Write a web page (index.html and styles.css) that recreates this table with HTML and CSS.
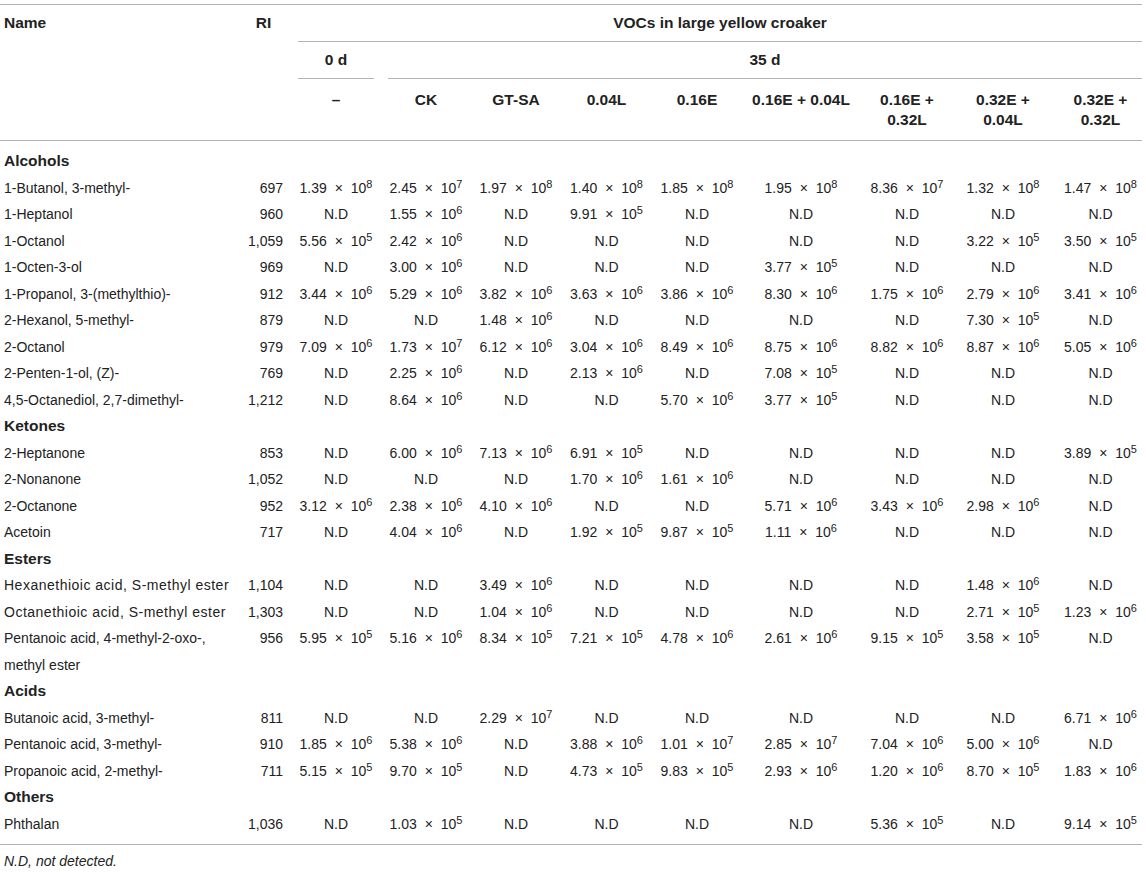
FILE: index.html
```html
<!DOCTYPE html>
<html lang="en">
<head>
<meta charset="utf-8">
<title>VOCs in large yellow croaker</title>
<link rel="stylesheet" href="styles.css">
</head>
<body>
<div class="page">
<table class="tbl">
  <colgroup>
    <col class="w-name"><col class="w-ri"><col class="w-90"><col class="w-90"><col class="w-90"><col class="w-91"><col class="w-90"><col class="w-118"><col class="w-94"><col class="w-98"><col class="w-90">
  </colgroup>
  <thead>
    <tr>
      <th class="h-name" rowspan="3">Name</th>
      <th class="h-ri" rowspan="3">RI</th>
      <th class="h-span" colspan="9"><div class="rule-r">VOCs in large yellow croaker</div></th>
    </tr>
    <tr>
      <th class="h-span"><div class="rule">0 d</div></th>
      <th class="h-span" colspan="8"><div class="rule-r">35 d</div></th>
    </tr>
    <tr class="h-trt">
      <th>–</th><th>CK</th><th>GT-SA</th><th>0.04L</th><th>0.16E</th><th>0.16E + 0.04L</th><th>0.16E + 0.32L</th><th>0.32E + 0.04L</th><th>0.32E + 0.32L</th>
    </tr>
  </thead>
  <tbody>
    <tr class="first"><td class="grp" colspan="11">Alcohols</td></tr>
    <tr><td>1-Butanol, 3-methyl-</td><td>697</td><td>1.39 × 10<sup>8</sup></td><td>2.45 × 10<sup>7</sup></td><td>1.97 × 10<sup>8</sup></td><td>1.40 × 10<sup>8</sup></td><td>1.85 × 10<sup>8</sup></td><td>1.95 × 10<sup>8</sup></td><td>8.36 × 10<sup>7</sup></td><td>1.32 × 10<sup>8</sup></td><td>1.47 × 10<sup>8</sup></td></tr>
    <tr><td>1-Heptanol</td><td>960</td><td>N.D</td><td>1.55 × 10<sup>6</sup></td><td>N.D</td><td>9.91 × 10<sup>5</sup></td><td>N.D</td><td>N.D</td><td>N.D</td><td>N.D</td><td>N.D</td></tr>
    <tr><td>1-Octanol</td><td>1,059</td><td>5.56 × 10<sup>5</sup></td><td>2.42 × 10<sup>6</sup></td><td>N.D</td><td>N.D</td><td>N.D</td><td>N.D</td><td>N.D</td><td>3.22 × 10<sup>5</sup></td><td>3.50 × 10<sup>5</sup></td></tr>
    <tr><td>1-Octen-3-ol</td><td>969</td><td>N.D</td><td>3.00 × 10<sup>6</sup></td><td>N.D</td><td>N.D</td><td>N.D</td><td>3.77 × 10<sup>5</sup></td><td>N.D</td><td>N.D</td><td>N.D</td></tr>
    <tr><td>1-Propanol, 3-(methylthio)-</td><td>912</td><td>3.44 × 10<sup>6</sup></td><td>5.29 × 10<sup>6</sup></td><td>3.82 × 10<sup>6</sup></td><td>3.63 × 10<sup>6</sup></td><td>3.86 × 10<sup>6</sup></td><td>8.30 × 10<sup>6</sup></td><td>1.75 × 10<sup>6</sup></td><td>2.79 × 10<sup>6</sup></td><td>3.41 × 10<sup>6</sup></td></tr>
    <tr><td>2-Hexanol, 5-methyl-</td><td>879</td><td>N.D</td><td>N.D</td><td>1.48 × 10<sup>6</sup></td><td>N.D</td><td>N.D</td><td>N.D</td><td>N.D</td><td>7.30 × 10<sup>5</sup></td><td>N.D</td></tr>
    <tr><td>2-Octanol</td><td>979</td><td>7.09 × 10<sup>6</sup></td><td>1.73 × 10<sup>7</sup></td><td>6.12 × 10<sup>6</sup></td><td>3.04 × 10<sup>6</sup></td><td>8.49 × 10<sup>6</sup></td><td>8.75 × 10<sup>6</sup></td><td>8.82 × 10<sup>6</sup></td><td>8.87 × 10<sup>6</sup></td><td>5.05 × 10<sup>6</sup></td></tr>
    <tr><td>2-Penten-1-ol, (Z)-</td><td>769</td><td>N.D</td><td>2.25 × 10<sup>6</sup></td><td>N.D</td><td>2.13 × 10<sup>6</sup></td><td>N.D</td><td>7.08 × 10<sup>5</sup></td><td>N.D</td><td>N.D</td><td>N.D</td></tr>
    <tr><td>4,5-Octanediol, 2,7-dimethyl-</td><td>1,212</td><td>N.D</td><td>8.64 × 10<sup>6</sup></td><td>N.D</td><td>N.D</td><td>5.70 × 10<sup>6</sup></td><td>3.77 × 10<sup>5</sup></td><td>N.D</td><td>N.D</td><td>N.D</td></tr>
    <tr><td class="grp" colspan="11">Ketones</td></tr>
    <tr><td>2-Heptanone</td><td>853</td><td>N.D</td><td>6.00 × 10<sup>6</sup></td><td>7.13 × 10<sup>6</sup></td><td>6.91 × 10<sup>5</sup></td><td>N.D</td><td>N.D</td><td>N.D</td><td>N.D</td><td>3.89 × 10<sup>5</sup></td></tr>
    <tr><td>2-Nonanone</td><td>1,052</td><td>N.D</td><td>N.D</td><td>N.D</td><td>1.70 × 10<sup>6</sup></td><td>1.61 × 10<sup>6</sup></td><td>N.D</td><td>N.D</td><td>N.D</td><td>N.D</td></tr>
    <tr><td>2-Octanone</td><td>952</td><td>3.12 × 10<sup>6</sup></td><td>2.38 × 10<sup>6</sup></td><td>4.10 × 10<sup>6</sup></td><td>N.D</td><td>N.D</td><td>5.71 × 10<sup>6</sup></td><td>3.43 × 10<sup>6</sup></td><td>2.98 × 10<sup>6</sup></td><td>N.D</td></tr>
    <tr><td>Acetoin</td><td>717</td><td>N.D</td><td>4.04 × 10<sup>6</sup></td><td>N.D</td><td>1.92 × 10<sup>5</sup></td><td>9.87 × 10<sup>5</sup></td><td>1.11 × 10<sup>6</sup></td><td>N.D</td><td>N.D</td><td>N.D</td></tr>
    <tr><td class="grp" colspan="11">Esters</td></tr>
    <tr><td class="wide">Hexanethioic acid, S-methyl ester</td><td>1,104</td><td>N.D</td><td>N.D</td><td>3.49 × 10<sup>6</sup></td><td>N.D</td><td>N.D</td><td>N.D</td><td>N.D</td><td>1.48 × 10<sup>6</sup></td><td>N.D</td></tr>
    <tr><td class="wide">Octanethioic acid, S-methyl ester</td><td>1,303</td><td>N.D</td><td>N.D</td><td>1.04 × 10<sup>6</sup></td><td>N.D</td><td>N.D</td><td>N.D</td><td>N.D</td><td>2.71 × 10<sup>5</sup></td><td>1.23 × 10<sup>6</sup></td></tr>
    <tr><td>Pentanoic acid, 4-methyl-2-oxo-, methyl ester</td><td>956</td><td>5.95 × 10<sup>5</sup></td><td>5.16 × 10<sup>6</sup></td><td>8.34 × 10<sup>5</sup></td><td>7.21 × 10<sup>5</sup></td><td>4.78 × 10<sup>6</sup></td><td>2.61 × 10<sup>6</sup></td><td>9.15 × 10<sup>5</sup></td><td>3.58 × 10<sup>5</sup></td><td>N.D</td></tr>
    <tr><td class="grp" colspan="11">Acids</td></tr>
    <tr><td>Butanoic acid, 3-methyl-</td><td>811</td><td>N.D</td><td>N.D</td><td>2.29 × 10<sup>7</sup></td><td>N.D</td><td>N.D</td><td>N.D</td><td>N.D</td><td>N.D</td><td>6.71 × 10<sup>6</sup></td></tr>
    <tr><td>Pentanoic acid, 3-methyl-</td><td>910</td><td>1.85 × 10<sup>6</sup></td><td>5.38 × 10<sup>6</sup></td><td>N.D</td><td>3.88 × 10<sup>6</sup></td><td>1.01 × 10<sup>7</sup></td><td>2.85 × 10<sup>7</sup></td><td>7.04 × 10<sup>6</sup></td><td>5.00 × 10<sup>6</sup></td><td>N.D</td></tr>
    <tr><td>Propanoic acid, 2-methyl-</td><td>711</td><td>5.15 × 10<sup>5</sup></td><td>9.70 × 10<sup>5</sup></td><td>N.D</td><td>4.73 × 10<sup>5</sup></td><td>9.83 × 10<sup>5</sup></td><td>2.93 × 10<sup>6</sup></td><td>1.20 × 10<sup>6</sup></td><td>8.70 × 10<sup>5</sup></td><td>1.83 × 10<sup>6</sup></td></tr>
    <tr><td class="grp" colspan="11">Others</td></tr>
    <tr class="last"><td>Phthalan</td><td>1,036</td><td>N.D</td><td>1.03 × 10<sup>5</sup></td><td>N.D</td><td>N.D</td><td>N.D</td><td>N.D</td><td>5.36 × 10<sup>5</sup></td><td>N.D</td><td>9.14 × 10<sup>5</sup></td></tr>
  </tbody>
</table>
<p class="note">N.D, not detected.</p>
</div>
</body>
</html>
```

FILE: styles.css
```css
html, body {
  margin: 0;
  padding: 0;
  background: #ffffff;
}

body {
  font-family: "Liberation Sans", Arial, Helvetica, sans-serif;
  font-size: 14px;
  color: #222222;
}

.page {
  padding-top: 4px;
  width: 1142px;
}

.tbl {
  width: 1142px;
  table-layout: fixed;
  border-collapse: separate;
  border-spacing: 0;
}

.w-name { width: 244px; }
.w-ri { width: 47px; }
.w-90 { width: 90px; }
.w-91 { width: 91px; }
.w-118 { width: 118px; }
.w-94 { width: 94px; }
.w-98 { width: 98px; }

.tbl th {
  font-size: 15.5px;
  font-weight: bold;
  line-height: 20px;
  vertical-align: top;
  text-align: center;
  padding: 0;
}

.tbl thead tr:first-child th {
  border-top: 1px solid #b4b4b4;
}

.h-name {
  text-align: left !important;
  padding: 8px 7px 0 4px !important;
  border-bottom: 1px solid #b4b4b4;
}

.h-ri {
  padding: 8px 8px 0 0 !important;
  border-bottom: 1px solid #b4b4b4;
}

.h-span .rule,
.h-span .rule-r {
  padding: 8px 0;
  border-bottom: 1px solid #b4b4b4;
  margin: 0 7px;
}

.h-span .rule-r {
  margin-right: 0;
}

.h-trt th {
  padding: 11px 7px 10px !important;
  border-bottom: 1px solid #b4b4b4;
}

.h-trt th:last-child {
  padding-right: 0 !important;
}

.tbl td {
  line-height: 26.5px;
  vertical-align: top;
  padding: 0 7px;
  text-align: center;
  white-space: nowrap;
  word-spacing: 4px;
}

.tbl td:first-child {
  text-align: left;
  padding: 0 7px 0 4px;
  white-space: normal;
  word-spacing: 0;
}

.tbl td.wide {
  letter-spacing: 0.5px;
}

.tbl td:nth-child(2) {
  text-align: right;
  padding: 0 8px 0 0;
}

.tbl td:last-child {
  padding-right: 0;
}

.tbl td.grp {
  font-size: 15.5px;
  font-weight: bold;
  padding-right: 0;
}

.tbl tr.first td {
  padding-top: 7px;
}

.tbl tr.last td {
  padding-bottom: 7px;
  border-bottom: 1px solid #b4b4b4;
}

sup {
  font-size: 11px;
  line-height: 0;
  vertical-align: 5px;
  word-spacing: 0;
}

.note {
  margin: 6px 0 0 0;
  padding-left: 4px;
  font-style: italic;
  line-height: 20px;
}
```
